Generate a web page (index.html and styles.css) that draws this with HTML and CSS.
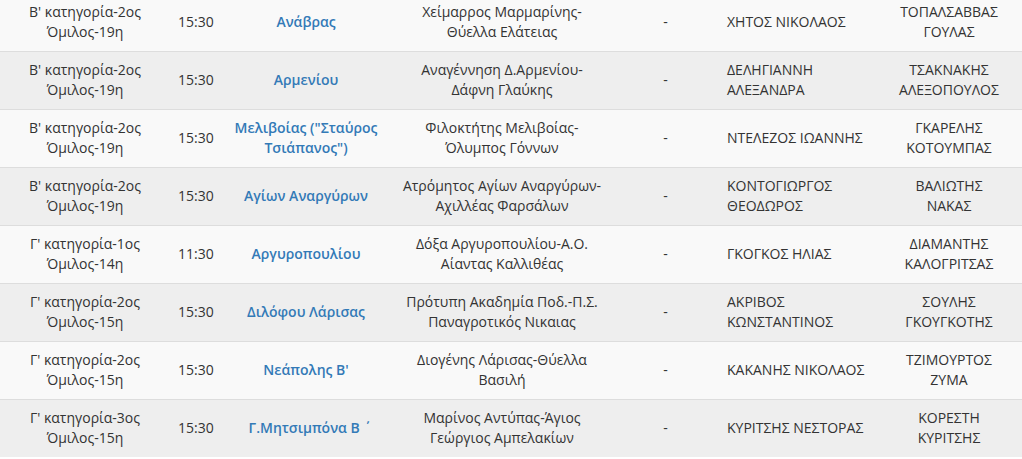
FILE: index.html
```html
<!DOCTYPE html>
<html lang="el">
<head>
<meta charset="utf-8">
<link rel="stylesheet" href="styles.css">
</head>
<body>
<div class="wrap">
<table class="matches">
<colgroup>
<col class="c-cat"><col class="c-time"><col class="c-field"><col class="c-match"><col class="c-score"><col class="c-ref"><col class="c-asst">
</colgroup>
<tbody>
<tr><td>Β' κατηγορία-2ος Όμιλος-19η</td><td>15:30</td><td><a href="#">Ανάβρας</a></td><td>Χείμαρρος Μαρμαρίνης-Θύελλα Ελάτειας</td><td>-</td><td class="ref">ΧΗΤΟΣ ΝΙΚΟΛΑΟΣ</td><td class="asst">ΤΟΠΑΛΣΑΒΒΑΣ ΓΟΥΛΑΣ</td></tr>
<tr><td>Β' κατηγορία-2ος Όμιλος-19η</td><td>15:30</td><td><a href="#">Αρμενίου</a></td><td>Αναγέννηση Δ.Αρμενίου-Δάφνη Γλαύκης</td><td>-</td><td class="ref">ΔΕΛΗΓΙΑΝΝΗ ΑΛΕΞΑΝΔΡΑ</td><td class="asst">ΤΣΑΚΝΑΚΗΣ ΑΛΕΞΟΠΟΥΛΟΣ</td></tr>
<tr><td>Β' κατηγορία-2ος Όμιλος-19η</td><td>15:30</td><td><a href="#">Μελιβοίας ("Σταύρος Τσιάπανος")</a></td><td>Φιλοκτήτης Μελιβοίας-Όλυμπος Γόννων</td><td>-</td><td class="ref">ΝΤΕΛΕΖΟΣ ΙΩΑΝΝΗΣ</td><td class="asst">ΓΚΑΡΕΛΗΣ ΚΟΤΟΥΜΠΑΣ</td></tr>
<tr><td>Β' κατηγορία-2ος Όμιλος-19η</td><td>15:30</td><td><a href="#">Αγίων Αναργύρων</a></td><td>Ατρόμητος Αγίων Αναργύρων-Αχιλλέας Φαρσάλων</td><td>-</td><td class="ref">ΚΟΝΤΟΓΙΩΡΓΟΣ ΘΕΟΔΩΡΟΣ</td><td class="asst">ΒΑΛΙΩΤΗΣ ΝΑΚΑΣ</td></tr>
<tr><td>Γ' κατηγορία-1ος Όμιλος-14η</td><td>11:30</td><td><a href="#">Αργυροπουλίου</a></td><td>Δόξα Αργυροπουλίου-Α.Ο. Αίαντας Καλλιθέας</td><td>-</td><td class="ref">ΓΚΟΓΚΟΣ ΗΛΙΑΣ</td><td class="asst">ΔΙΑΜΑΝΤΗΣ ΚΑΛΟΓΡΙΤΣΑΣ</td></tr>
<tr><td>Γ' κατηγορία-2ος Όμιλος-15η</td><td>15:30</td><td><a href="#">Διλόφου Λάρισας</a></td><td>Πρότυπη Ακαδημία Ποδ.-Π.Σ. Παναγροτικός Νικαιας</td><td>-</td><td class="ref">ΑΚΡΙΒΟΣ ΚΩΝΣΤΑΝΤΙΝΟΣ</td><td class="asst">ΣΟΥΛΗΣ ΓΚΟΥΓΚΟΤΗΣ</td></tr>
<tr><td>Γ' κατηγορία-2ος Όμιλος-15η</td><td>15:30</td><td><a href="#">Νεάπολης Β'</a></td><td>Διογένης Λάρισας-Θύελλα Βασιλή</td><td>-</td><td class="ref">ΚΑΚΑΝΗΣ ΝΙΚΟΛΑΟΣ</td><td class="asst">ΤΖΙΜΟΥΡΤΟΣ ΖΥΜΑ</td></tr>
<tr><td>Γ' κατηγορία-3ος Όμιλος-15η</td><td>15:30</td><td><a href="#">Γ.Μητσιμπόνα Β ΄</a></td><td>Μαρίνος Αντύπας-Άγιος Γεώργιος Αμπελακίων</td><td>-</td><td class="ref">ΚΥΡΙΤΣΗΣ ΝΕΣΤΟΡΑΣ</td><td class="asst">ΚΟΡΕΣΤΗ ΚΥΡΙΤΣΗΣ</td></tr>
</tbody>
</table>
</div>
</body>
</html>
```

FILE: styles.css
```css
html, body {
  margin: 0;
  padding: 0;
  background: #ffffff;
}
body {
  font-family: "Open Sans", "Noto Sans", sans-serif;
  font-size: 14px;
  color: #333333;
  overflow: hidden;
}
.wrap {
  margin-top: -7px;
}
.matches {
  width: 1022px;
  border-collapse: collapse;
  table-layout: fixed;
}
.c-cat { width: 170px; }
.c-time { width: 50px; }
.c-field { width: 172px; }
.c-match { width: 220px; }
.c-score { width: 107px; }
.c-ref { width: 168px; }
.c-asst { width: 135px; }
.matches td {
  border-top: 1px solid #dddddd;
  padding: 8px 8px 9px;
  line-height: 20px;
  text-align: center;
  vertical-align: middle;
}
.matches td.ref {
  text-align: left;
}
.matches td.asst {
  padding-right: 19px;
}
.matches tr:nth-child(odd) td {
  background: #f9f9f9;
}
.matches tr:nth-child(even) td {
  background: #eeeeee;
}
.matches a {
  color: #337ab7;
  font-weight: 600;
  text-decoration: none;
}
```
